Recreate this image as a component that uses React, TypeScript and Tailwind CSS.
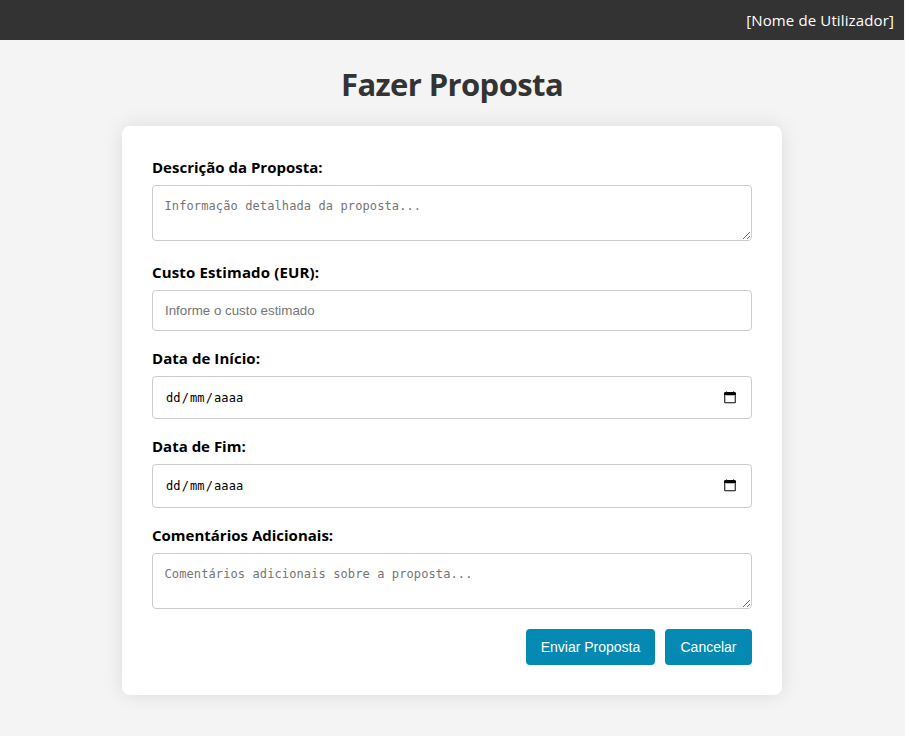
import type { ReactNode } from 'react';

const uiFont = "font-['Open_Sans','Noto_Sans',sans-serif]";
const fieldBox = 'block w-full rounded-[4px] border border-[#ccc] bg-white outline-none';
const mono = "font-['DejaVu_Sans_Mono',monospace] text-[12px] tracking-[0.108px]";
const area = 'h-14 resize pl-[11.5px] pr-3 py-3 leading-4 placeholder:text-[#757575]';

function Field({ label, className, labelClass = '', children }: { label: string; className: string; labelClass?: string; children: ReactNode }) {
  return (
    <div className={className}>
      <label className={`mb-[7px] block whitespace-nowrap text-[15px] font-bold leading-[21px] text-black ${uiFont} ${labelClass}`}>{label}</label>
      {children}
    </div>
  );
}

function CalendarIcon() {
  return (
    <svg width="12" height="13" viewBox="0 0 12 13" shapeRendering="crispEdges" aria-hidden="true">
      <path fill="#777" d="M2 0h1v1H2zM9 0h1v1H9zM0 1h1v1H0zM11 1h1v1h-1z" />
      <path fill="#000" d="M1 1h10v1H1zM0 2h12v2H0z" />
      <path fill="#444" d="M0 4h1v8H0zM11 4h1v8h-1zM1 11h10v1H1z" />
      <path fill="#bbb" d="M1 4h10v1H1zM1 5h1v6H1zM10 5h1v6h-1zM1 12h10v1H1z" />
    </svg>
  );
}

function DateBox({ className }: { className: string }) {
  return (
    <div className={`${fieldBox} ${className} flex items-start justify-between pl-[13px] pr-[15px] pt-[13px]`}>
      <span className={`${mono} leading-4 text-black`}>
        dd<span className="px-px">/</span>mm<span className="px-px">/</span>aaaa
      </span>
      <span className="mt-px">
        <CalendarIcon />
      </span>
    </div>
  );
}

export default function App() {
  return (
    <div className="h-[736px] overflow-hidden bg-[#f4f4f4]">
      <header className="flex h-10 w-[904px] items-center justify-end bg-[#333] pr-[10px]">
        <span className={`whitespace-nowrap text-[15px] leading-5 tracking-[0.13px] text-white ${uiFont}`}>[Nome de Utilizador]</span>
      </header>
      <h1 className={`mt-[23px] h-[43px] w-[904px] whitespace-nowrap text-center text-[31px] font-bold leading-[43px] tracking-[-0.6px] text-[#333] ${uiFont}`}>
        Fazer Proposta
      </h1>
      <main className="ml-[122px] mt-5 h-[569px] w-[660px] rounded-[8px] bg-white px-[30px] pt-[31px] shadow-[0_0_20px_rgba(0,0,0,0.1)]">
        <Field label="Descrição da Proposta:" className="h-[105px]">
          <textarea className={`${fieldBox} ${mono} ${area}`} placeholder="Informação detalhada da proposta..." />
        </Field>
        <Field label="Custo Estimado (EUR):" className="h-[86px]" labelClass="tracking-[0.15px]">
          <input className={`${fieldBox} h-[41px] px-3 font-['Liberation_Sans',sans-serif] text-[13.333px] placeholder:text-[#757575]`} placeholder="Informe o custo estimado" />
        </Field>
        <Field label="Data de Início:" className="h-[88px]" labelClass="tracking-[0.06px]">
          <DateBox className="h-[43px]" />
        </Field>
        <Field label="Data de Fim:" className="h-[89px]">
          <DateBox className="h-11" />
        </Field>
        <Field label="Comentários Adicionais:" className="h-[104px]">
          <textarea className={`${fieldBox} ${mono} ${area}`} placeholder="Comentários adicionais sobre a proposta..." />
        </Field>
        <div className="flex justify-end gap-[10px] font-['Liberation_Sans',sans-serif] text-[14px] text-white">
          <button className="h-9 w-[129px] whitespace-nowrap rounded-[4px] bg-[#048ab2]">Enviar Proposta</button>
          <button className="h-9 w-[87px] whitespace-nowrap rounded-[4px] bg-[#048ab2]">Cancelar</button>
        </div>
      </main>
    </div>
  );
}
